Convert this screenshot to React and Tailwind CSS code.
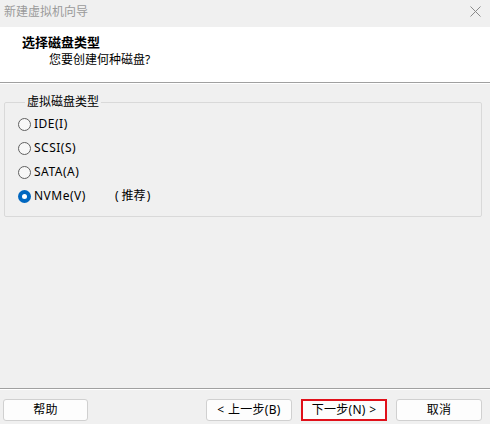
import React from "react";

function Radio({ checked }) {
  return checked ? (
    <span className="w-[13px] h-[13px] rounded-full bg-[#0067c0] flex items-center justify-center shrink-0">
      <span className="w-[5px] h-[5px] rounded-full bg-white" />
    </span>
  ) : (
    <span className="w-[13px] h-[13px] rounded-full border border-[#606060] bg-[#f7f7f7] shrink-0" />
  );
}

function Btn({ children, className = "" }) {
  return (
    <div
      className={
        "h-[22px] flex items-center justify-center rounded-[3px] border border-[#d0d0d0] bg-[#fdfdfd] text-[12px] text-black tracking-[0.3px] " +
        className
      }
    >
      {children}
    </div>
  );
}

export default function App() {
  const opts = [
    { label: "IDE(I)" },
    { label: "SCSI(S)" },
    { label: "SATA(A)" },
    { label: "NVMe(V)", checked: true, extra: true },
  ];
  return (
    <div
      className="w-[490px] h-[424px] bg-[#f0f0f0] flex flex-col text-[12px] text-black overflow-hidden"
      style={{ fontFamily: '"Noto Sans", "Noto Sans CJK SC", sans-serif' }}
    >
      <div className="h-[27px] flex items-center justify-between pl-[4px] pr-[9px] bg-[#f0f0f0]">
        <span className="text-[#9a9a9a] text-[12px] leading-none pb-[3px]">新建虚拟机向导</span>
        <svg width="11" height="11" viewBox="0 0 11 11" className="mb-[5px]">
          <path d="M0.5 0.5 L10.5 10.5 M10.5 0.5 L0.5 10.5" stroke="#8a8a8a" strokeWidth="1" />
        </svg>
      </div>
      <div className="h-[56px] bg-white border-b border-[#a0a0a0] flex flex-col pl-[22px] pt-[6px]">
        <div className="text-[13px] font-bold leading-[18px]">选择磁盘类型</div>
        <div className="pl-[27px] leading-[18px]">您要创建何种磁盘?</div>
      </div>
      <div className="flex-1 flex flex-col border-t border-white px-[4px] pt-[10px]">
        <fieldset className="border border-[#d9d9d9] rounded-[2px] pl-[13px] pb-[8px] pt-[2px] mr-[4px]">
          <legend className="ml-[7px] px-[2px] leading-[16px]">虚拟磁盘类型</legend>
          {opts.map((o) => (
            <div key={o.label} className="h-[24px] flex items-center">
              <Radio checked={o.checked} />
              <span className="ml-[3px] w-[81px] tracking-[0.5px]">{o.label}</span>
              {o.extra && (
                <span>
                  <span className="mr-[3px]">(</span>推荐<span className="ml-[1px]">)</span>
                </span>
              )}
            </div>
          ))}
        </fieldset>
      </div>
      <div className="h-[36px] border-t border-[#a0a0a0] flex flex-col">
        <div className="border-t border-white flex-1 flex items-start pt-[9px] pl-[3px] pr-[8px]">
          <Btn className="w-[85px]">帮助</Btn>
          <div className="flex-1" />
          <Btn className="w-[86px]">&lt; 上一步(B)</Btn>
          <Btn className="w-[86px] ml-[9px] !rounded-none !border-2 !border-[#e0101a]">下一步(N) &gt;</Btn>
          <Btn className="w-[86px] ml-[9px]">取消</Btn>
        </div>
      </div>
    </div>
  );
}
